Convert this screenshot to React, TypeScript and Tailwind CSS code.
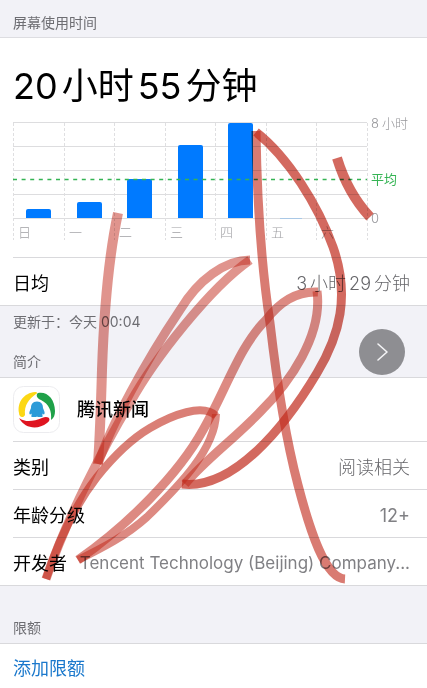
import type { ReactNode } from "react";

type DayUsage = {
  day: string;
  height: number;
};

// bar heights in chart units, where 96 is eight hours
const week: DayUsage[] = [
  { day: "日", height: 9 },
  { day: "一", height: 16 },
  { day: "二", height: 39 },
  { day: "三", height: 73 },
  { day: "四", height: 95 },
  { day: "五", height: 1 },
  { day: "六", height: 0 },
];

const colX = [0, 51, 101, 152, 202, 253, 303, 354];
const rowY = [1, 25, 49, 73, 97];

const strokes = [
  { d: "M118 213C109 255 104 310 102 370C101 405 100 435 98 464", width: 10, opacity: 0.5 },
  { d: "M98 464C111 425 145 362 180 310C198 280 225 260 250 260", width: 9, opacity: 0.5 },
  { d: "M250 260C210 288 155 358 130 403C105 445 68 515 46 579", width: 9, opacity: 0.5 },
  { d: "M46 579C56 548 73 508 97 477C113 457 133 438 150 428C172 415 203 403 216 416", width: 8, opacity: 0.6 },
  { d: "M216 414C215 449 180 485 147 517C126 536 102 548 78 560", width: 8, opacity: 0.55 },
  { d: "M78 560C128 525 178 475 203 430C225 392 240 345 266 320C281 300 298 291 318 292", width: 9, opacity: 0.55 },
  { d: "M317 291C323 335 290 382 260 412C233 440 205 460 185 484", width: 9, opacity: 0.55 },
  { d: "M182 484C232 490 283 430 317 373C340 335 350 295 333 247C318 205 288 157 256 132", width: 9, opacity: 0.7 },
  { d: "M256 131C257 200 262 270 270 323C276 375 284 432 298 485C310 531 325 578 345 579", width: 9, opacity: 0.62 },
  { d: "M337 158C344 181 355 201 370 217", width: 10, opacity: 0.7 },
];

function SectionTitle({ children }: { children: ReactNode }) {
  return <h2 className="px-[13px] text-[14px] leading-5 text-[#6d6d72]">{children}</h2>;
}

function Duration({ parts, className }: { parts: string[]; className: string }) {
  return (
    <span className={className}>
      {parts.map((part) => (
        <span key={part}>{part}</span>
      ))}
    </span>
  );
}

function InfoRow({ label, children }: { label: string; children: ReactNode }) {
  return (
    <div className="ml-[13px] flex h-12 items-center justify-between gap-2 border-t border-[#d9d9dc] pt-[3px] pr-[17px]">
      <dt className="shrink-0 text-[18px] text-black">{label}</dt>
      <dd className="text-[18px] font-light whitespace-nowrap text-[#66666a]">{children}</dd>
    </div>
  );
}

function UsageChart() {
  return (
    <svg viewBox="0 0 414 120" className="block h-auto w-full overflow-visible" role="img" aria-label="每日屏幕使用时间">
      {rowY.map((y) => (
        <line key={y} x1="0" x2="354" y1={y - 0.5} y2={y - 0.5} stroke="#dddddf" />
      ))}
      {colX.map((x) => (
        <line key={x} x1={x + 0.5} x2={x + 0.5} y1="1" y2="118" stroke="#dfdfe1" strokeDasharray="3 2" />
      ))}
      {week.map(({ day, height }, i) => (
        <g key={day}>
          {height > 1 && (
            <path
              d={`M${colX[i] + 13} 96v${2 - height}q0 -2 2 -2h21q2 0 2 2v${height - 2}z`}
              fill="#007aff"
            />
          )}
          {height === 1 && <rect x={colX[i] + 14} y="96" width="22" height="1" fill="#a9c8e6" />}
          <text x={colX[i] + 5} y="115" fontSize="13" fontWeight="300" fill="#a0a0a4">
            {day}
          </text>
        </g>
      ))}
      <line x1="0" x2="354" y1="57.5" y2="57.5" stroke="#35b454" strokeWidth="1.5" strokeDasharray="4 4.6" />
      <text x="358" y="6" fontSize="13" fontWeight="300" fill="#96969a">
        8<tspan dx="3">小时</tspan>
      </text>
      <text x="358" y="62" fontSize="13" fill="#35b454">
        平均
      </text>
      <text x="358" y="101" fontSize="13" fontWeight="300" fill="#96969a">
        0
      </text>
    </svg>
  );
}

function NewsIcon() {
  return (
    <svg viewBox="0 0 48 48" className="size-12 shrink-0" aria-hidden="true">
      <rect x="0.5" y="0.5" width="46" height="46" rx="10" fill="#fff" stroke="#ececef" />
      <path d="M22 6C11 7 4 16 6 27C6 32 11 32 12 29C11 19 16 13 23 8C25 7 24 6 22 6Z" fill="#fcd714" />
      <path d="M25 7C34 5 42 13 42 25C42 29 41 32 38 34C39 25 36 18 28 14C23 12 23 8 25 7Z" fill="#1fa149" />
      <path d="M6 32C13 37 21 35 29 32C36 29 39 34 34 37C25 44 12 43 6 32Z" fill="#df1420" />
      <path
        d="M24 15.500C19.500 15.500 18 18.500 18 22C17 25 15.500 27 17 28.500C17.500 28.500 18 28 18.500 27.500C19 30 17 31 20 31H23L24 30.500L25 31H28C31 31 29 30 29.500 27.500C30 28 30.500 28.500 31 28.500C32.500 27 31 25 30 22C30 18.500 28.500 15.500 24 15.500Z"
        fill="#2d9bd8"
      />
    </svg>
  );
}

function PenMarks() {
  return (
    <svg
      viewBox="0 0 427 688"
      className="pointer-events-none absolute inset-x-0 top-0 h-auto w-full mix-blend-multiply"
      fill="none"
      stroke="#c12a1b"
      strokeLinejoin="round"
      aria-hidden="true"
    >
      {strokes.map((stroke) => (
        <path key={stroke.d} d={stroke.d} strokeWidth={stroke.width} strokeOpacity={stroke.opacity} />
      ))}
    </svg>
  );
}

export default function App() {
  return (
    <main className="relative min-h-screen overflow-hidden bg-white font-['Inter','Noto_Sans_CJK_SC',sans-serif]">
      <header className="flex h-[38px] items-end border-b border-[#dddde1] bg-[#f2f2f7] pb-1">
        <SectionTitle>屏幕使用时间</SectionTitle>
      </header>

      <section>
        <h1 className="px-[13px] pt-6 text-[36px] leading-12 font-normal text-black">
          <Duration parts={["20", "小时", "55", "分钟"]} className="flex gap-1" />
        </h1>
        <div className="pt-3 pb-[15px] pl-[13px]">
          <UsageChart />
        </div>
        <dl>
          <InfoRow label="日均">
            <Duration parts={["3", "小时", "29", "分钟"]} className="flex gap-[3px]" />
          </InfoRow>
        </dl>
      </section>

      <div className="relative h-[73px] border-y border-[#d9d9dc] bg-[#f2f2f7] pt-1.5">
        <p className="px-[13px] text-[14px] leading-5 text-[#6d6d72]">更新于：今天 00:04</p>
        <div className="pt-5">
          <SectionTitle>简介</SectionTitle>
        </div>
        <button
          type="button"
          aria-label="下一页"
          className="absolute top-[23px] right-[22px] flex size-[46px] items-center justify-center rounded-full bg-[#8e8e92]"
        >
          <svg viewBox="0 0 24 24" className="size-6" fill="none" stroke="#f4f4f6" strokeWidth="1.600">
            <path d="M8 4L17 12L8 20" strokeLinecap="round" strokeLinejoin="round" />
          </svg>
        </button>
      </div>

      <section>
        <div className="flex h-[63px] items-center gap-4 px-[13px]">
          <NewsIcon />
          <h3 className="text-[18px] font-medium text-black">腾讯新闻</h3>
        </div>
        <dl>
          <InfoRow label="类别">阅读相关</InfoRow>
          <InfoRow label="年龄分级">
            <span className="font-normal text-[#808084]">12+</span>
          </InfoRow>
          <InfoRow label="开发者">
            <span className="text-[17px] font-normal text-[#808084]">Tencent Technology (Beijing) Company...</span>
          </InfoRow>
        </dl>
      </section>

      <div className="flex h-[59px] items-end border-y border-[#d9d9dc] bg-[#f2f2f7] pb-[5px]">
        <SectionTitle>限额</SectionTitle>
      </div>
      <button type="button" className="flex h-12 w-full items-center px-[13px] text-[18px] text-[#1a78cc]">
        添加限额
      </button>

      <PenMarks />
    </main>
  );
}
